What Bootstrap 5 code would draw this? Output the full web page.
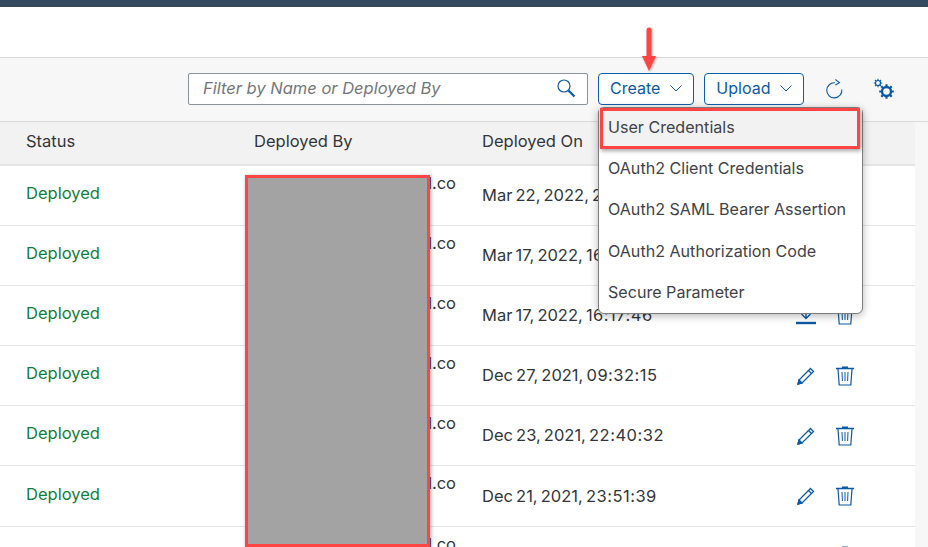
<!DOCTYPE html>
<html lang="en"><head><meta charset="utf-8"><title>Security Material</title>
<link href="https://cdn.jsdelivr.net/npm/bootstrap@5.3.0/dist/css/bootstrap.min.css" rel="stylesheet">
<style>
html,body{height:547px;overflow:hidden}
body{font-family:Inter,Roboto,"Liberation Sans",sans-serif;font-size:16.500px;color:#32363a;background:#fff;position:relative}
.topstrip{height:7px;background:#354a5f}
.headspace{height:51px;background:#fff;border-bottom:1px solid #d9d9d9}
.pagebody{background:#f7f7f7;height:489px;overflow:hidden}
.toolstrip{height:64px;padding:15px 23px 0 188px;gap:10px;background:#f7f7f7;border-bottom:1px solid #d9d9d9}
.filterbox{width:400px;height:32px;background:#fff;border:1px solid #89919a;border-radius:2px;padding:0 11px 2px 14px;color:#74777a;font-style:italic}
.sapbtn{height:32px;border:1px solid #0b5ea8;border-radius:4px;background:#fff;color:#0a5aa5;font-size:16px;line-height:1;padding:0 11px 2px 11px;gap:10px}
.toolicon{width:40px;height:32px;color:#0a5aa5}
.datagrid{table-layout:fixed;width:915px;margin:0;--bs-table-bg:#fff;--bs-table-color:#32363a}
.datagrid th{font-weight:400;height:43px;background:#f2f2f2;padding:0 0 3px 26px;vertical-align:middle;border-bottom:2px solid #e5e5e5}
.datagrid td{height:60.200px;padding:0 0 4px 26px;vertical-align:middle;border-bottom:1px solid #e5e5e5}
.datagrid td.mailcell{vertical-align:top;text-align:right;padding:5px 0 0 0;white-space:nowrap}
.datagrid td.lowcell{padding-bottom:0}
.datestamp{word-spacing:-1.500px}
.clocktime{letter-spacing:.5px}
.statusok{color:#107e3e}
.actcell{gap:20px;padding-left:86px;color:#0a5aa5;height:100%}
.redact{position:absolute;left:245px;top:175px;width:185px;height:372px;background:#a3a3a3;border:3px solid #f44;box-shadow:1px 1px 4px rgba(0,0,0,.35)}
.menupop{position:absolute;left:598px;top:107px;width:265px;height:207px;background:#fff;border:1px solid #7d7d7d;border-radius:6px;box-shadow:0 2px 8px rgba(0,0,0,.28);padding:0;margin:0;color:#3f4347;font-size:16.100px}
.menupop li{height:41.300px;padding-left:9px;display:flex;align-items:center;white-space:nowrap}
.menupop li.picked{background:#f2f2f2;height:39px;margin-bottom:.6px;position:relative}
.picked-frame{position:absolute;left:1px;top:0;width:260px;height:41px;border:3px solid #f44;box-shadow:1px 2px 4px rgba(0,0,0,.35)}
.pointer{position:absolute;left:641px;top:27px;filter:drop-shadow(1px 1px 1px rgba(0,0,0,.3))}
</style></head>
<body>
<div class="topstrip"></div>
<div class="headspace"></div>
<div class="pagebody">
  <div class="toolstrip d-flex align-items-start">
    <div class="filterbox d-flex align-items-center justify-content-between flex-shrink-0">
      <span>Filter by Name or Deployed By</span>
      <svg width="20" height="20" viewBox="0 0 20 20" fill="none" stroke="#0a5aa5"><circle cx="8" cy="8" r="6" stroke-width="1.200"/><path d="M12.500 12.500l6 6" stroke-width="2.200"/></svg>
    </div>
    <button class="sapbtn d-flex align-items-center flex-shrink-0" type="button">Create
      <svg width="12" height="7" viewBox="0 0 12 7" fill="none" stroke="#0a5aa5" stroke-width="1"><path d="M.5.500L6 6l5.500-5.500"/></svg></button>
    <button class="sapbtn d-flex align-items-center flex-shrink-0" type="button">Upload
      <svg width="12" height="7" viewBox="0 0 12 7" fill="none" stroke="#0a5aa5" stroke-width="1"><path d="M.5.500L6 6l5.500-5.500"/></svg></button>
    <div class="toolicon d-flex align-items-center justify-content-center flex-shrink-0">
      <svg width="20" height="24" viewBox="0 0 22 24" fill="none" stroke="#0a5aa5" stroke-width="1.200"><path d="M12 5.200A8.300 8.300 0 1 0 19.600 12.500"/><path d="M12.500 1.500L17 5l-4.500 2.500"/></svg>
    </div>
    <div class="toolicon d-flex align-items-center justify-content-center flex-shrink-0">
      <svg width="22" height="22" viewBox="0 0 22 22" fill="none" stroke="#0a5aa5"><circle cx="5" cy="5" r="2.500" stroke-width="1.200"/><path d="M5 .8v1.700M5 7.500v1.700M.8 5h1.700M7.500 5h1.700M2 2l1.200 1.200M6.800 6.800L8 8M8 2L6.800 3.200M3.200 6.800L2 8" stroke-width="1.100"/><circle cx="13.500" cy="13.500" r="4.500" stroke-width="2.400"/><path d="M13.500 6.200v3M13.500 17.800v3M6.200 13.500h3M17.800 13.500h3M8.300 8.300l2.200 2.200M16.500 16.500l2.200 2.200M18.700 8.300l-2.200 2.200M10.500 16.500l-2.200 2.200" stroke-width="2.200"/></svg>
    </div>
  </div>
  <table class="table datagrid">
    <colgroup><col style="width:228px"><col style="width:228px"><col style="width:228px"><col style="width:231px"></colgroup>
    <thead><tr><th>Status</th><th>Deployed By</th><th>Deployed On</th><th></th></tr></thead>
    <tbody id="rows"></tbody>
  </table>
</div>
<div class="redact"></div>
<ul class="menupop list-unstyled">
  <li class="picked">User Credentials<span class="picked-frame"></span></li>
  <li>OAuth2 Client Credentials</li>
  <li>OAuth2 SAML Bearer Assertion</li>
  <li>OAuth2 Authorization Code</li>
  <li>Secure Parameter</li>
</ul>
<svg class="pointer" width="16" height="46" viewBox="0 0 16 46"><path d="M5.500 3a2.500 2.500 0 0 1 5 0v26H15L8 44 1 29h4.500z" fill="#f44"/></svg>
<script>
const pen='<svg width="20" height="20" viewBox="0 0 20 20" fill="none" stroke="#0a5aa5" stroke-width="1.300"><path d="M14.500 2.500l3 3L6 17l-4 1 1-4z"/><path d="M12.500 4.500l3 3"/><path d="M2 18l1-4 3 3z" fill="#0a5aa5"/></svg>';
const dl='<svg width="20" height="20" viewBox="0 0 20 20" fill="none" stroke="#0a5aa5"><path d="M10 2v11M5.500 9l4.500 4.500L14.500 9" stroke-width="1.300"/><path d="M0 18h20" stroke-width="2.400"/></svg>';
const bin='<svg width="18" height="20" viewBox="0 0 18 20" fill="none" stroke="#0a5aa5"><path d="M0 2.500h18M6 1.200h6" stroke-width="1.600"/><path d="M2 3l1.200 16h11.600L16 3" stroke-width="1.200"/><path d="M6 6l.4 9M9 6v9M12 6l-.4 9" stroke-width="1"/></svg>';
const data=[['Mar 22, 2022,','21:08:12',dl],['Mar 17, 2022,','16:20:03',dl],['Mar 17, 2022,','16:17:46',dl],['Dec 27, 2021,','09:32:15',pen],['Dec 23, 2021,','22:40:32',pen],['Dec 21, 2021,','23:51:39',pen],['Dec 20, 2021,','18:12:44',pen]];
document.getElementById('rows').innerHTML=data.map(r=>`<tr><td class="statusok">Deployed</td><td class="mailcell">admin@mail.co</td><td class="lowcell datestamp">${r[0]} <span class="clocktime">${r[1]}</span></td><td class="lowcell"><div class="actcell d-flex align-items-center">${r[2]}${bin}</div></td></tr>`).join('');
</script>
<script src="https://cdn.jsdelivr.net/npm/bootstrap@5.3.0/dist/js/bootstrap.bundle.min.js"></script>
</body></html>
